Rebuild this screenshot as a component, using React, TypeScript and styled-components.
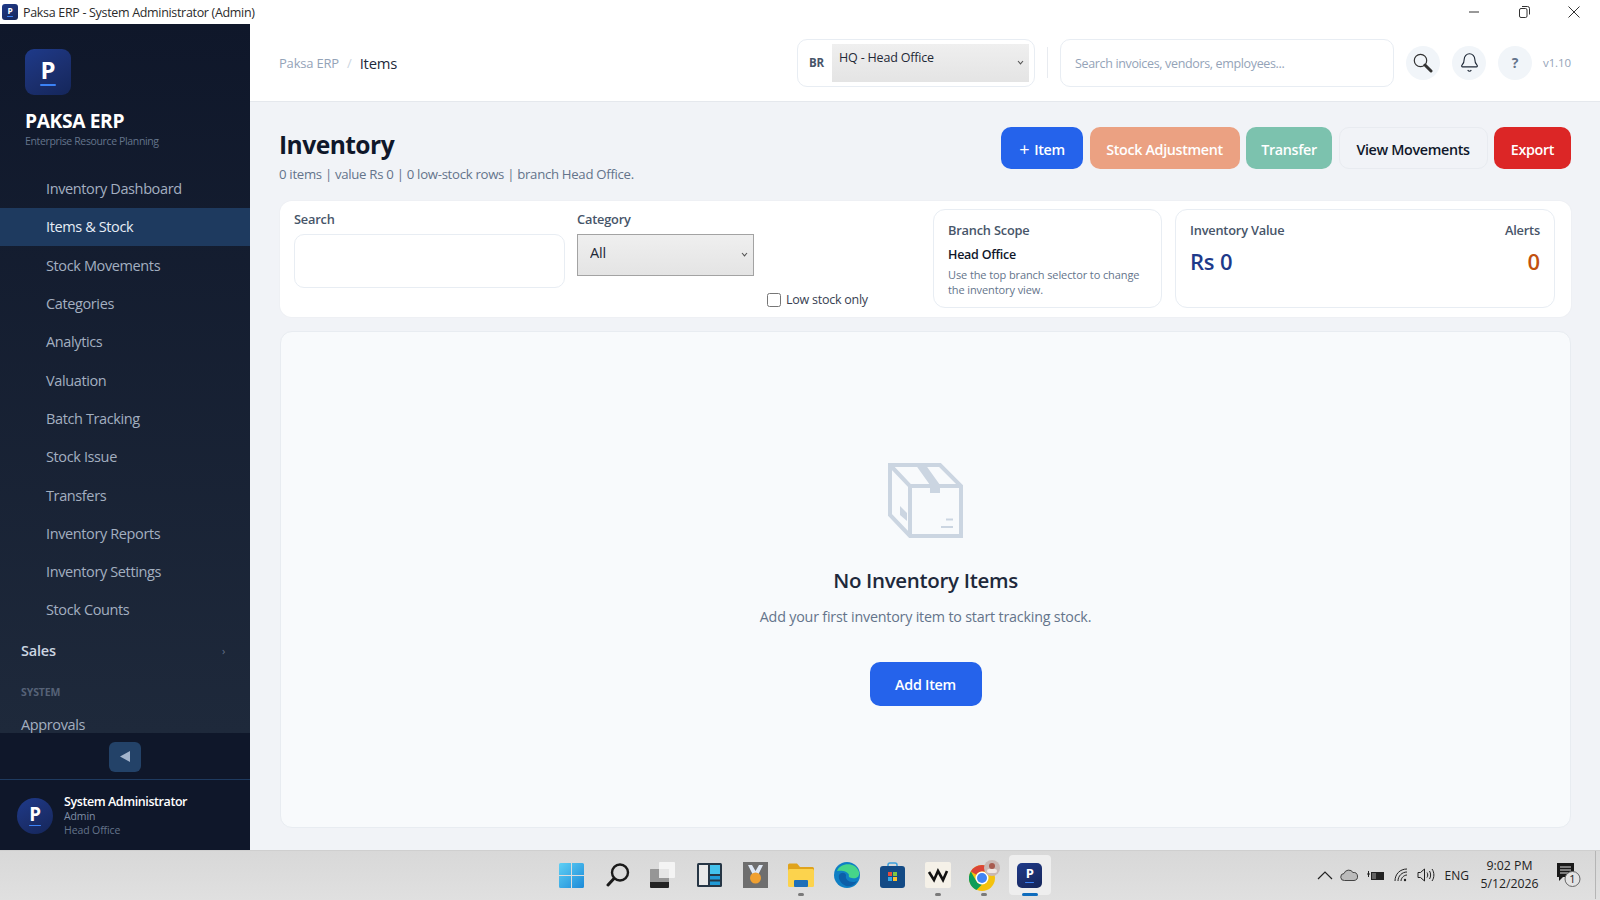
import React from "react";
import styled, { createGlobalStyle } from "styled-components";
import { Bell } from "lucide-react";

const Global = createGlobalStyle`
  * { box-sizing: border-box; }
  html, body { margin: 0; padding: 0; width: 1600px; height: 900px; overflow: hidden; }
  body { font-family: "Open Sans", "Noto Sans", "Liberation Sans", sans-serif; background: #fff; color: #0f172a; }
`;

const Screen = styled.div`display: flex; flex-direction: column; width: 1600px; height: 900px;`;

const TitleBar = styled.div`display: flex; align-items: center; height: 24px; padding: 0 0 0 2px; background: #fff; flex: none;`;
const TitleText = styled.span`margin-left: 5px; font-size: 12.5px; letter-spacing: -0.32px; color: #2b2b2b;`;
const WindowControls = styled.div`display: flex; margin-left: auto; padding-right: 1px;`;
const WindowButton = styled.div`width: 50px; height: 24px; display: flex; align-items: center; justify-content: center; color: #333;`;

const MiniLogo = styled.div<{ $size: number; $radius: string }>`
  width: ${p => p.$size}px; height: ${p => p.$size}px; border-radius: ${p => p.$radius};
  background: linear-gradient(150deg, #1e3a8a 0%, #1b2f6e 55%, #14265a 100%);
  display: flex; flex-direction: column; align-items: center; justify-content: center; flex: none;
  color: #fff; font-weight: 700; font-size: ${p => p.$size * 0.52}px; line-height: 1;
  &::after { content: ""; display: block; width: 36%; height: ${p => Math.max(1, p.$size * 0.04)}px; margin-top: ${p => p.$size * 0.05}px; background: #3b82f6; border-radius: 1px; }
`;

const Body = styled.div`display: flex; height: 826px; flex: none;`;

const Sidebar = styled.aside`display: flex; flex-direction: column; width: 250px; flex: none; background: #0f172a;`;
const SidebarScroll = styled.div`flex: 1; min-height: 0; overflow: hidden; background: linear-gradient(180deg, #0f172a 0%, #1e293b 100%);`;
const Brand = styled.div`height: 145.5px; padding: 25px 25px 0;`;
const BrandName = styled.div`margin-top: 14px; font-size: 19.2px; line-height: 24px; font-weight: 700; letter-spacing: -0.35px; color: #fff;`;
const BrandSub = styled.div`margin-top: 1px; font-size: 10.5px; line-height: 14px; letter-spacing: -0.36px; color: #64748b;`;
const NavItem = styled.div<{ $active?: boolean }>`
  height: 38.3px; display: flex; align-items: center; padding-left: 46px;
  font-size: 14.5px; letter-spacing: -0.38px; color: ${p => (p.$active ? "#e6edf6" : "#a3afc0")};
  background: ${p => (p.$active ? "#1e3a5f" : "transparent")};
`;
const NavGroup = styled.div`height: 38px; display: flex; align-items: center; justify-content: space-between; padding: 0 25px 0 21px; margin-top: 2px; font-size: 14.5px; font-weight: 600; letter-spacing: -0.2px; color: #cbd5e1;`;
const GroupChevron = styled.span`font-size: 11px; font-weight: 400; color: #64748b;`;
const NavSection = styled.div`padding-left: 21px; margin-top: 14px; height: 18px; line-height: 18px; font-size: 10.5px; font-weight: 700; letter-spacing: -0.1px; color: #566277;`;
const NavPlain = styled.div`height: 38px; display: flex; align-items: center; padding-left: 21px; margin-top: 4px; font-size: 14.5px; letter-spacing: -0.38px; color: #a3afc0;`;

const CollapseRow = styled.div`height: 47px; flex: none; display: flex; align-items: center; justify-content: center; border-bottom: 1px solid #1e3a5f; padding-top: 1px; background: #0f172a;`;
const CollapseButton = styled.button`width: 32px; height: 30px; border: 0; padding: 0; border-radius: 6px; background: #234268; color: #94a3b8; display: flex; align-items: center; justify-content: center;`;
const UserRow = styled.div`height: 70px; flex: none; display: flex; align-items: center; gap: 11px; padding: 1px 17px 0;`;
const UserText = styled.div`display: flex; flex-direction: column;`;
const UserName = styled.div`font-size: 12.5px; line-height: 15px; font-weight: 600; letter-spacing: -0.42px; color: #fff;`;
const UserMeta = styled.div<{ $dim?: boolean }>`font-size: 10.5px; line-height: 14px; letter-spacing: -0.1px; color: ${p => (p.$dim ? "#64748b" : "#7f8ea6")};`;

const Main = styled.main`flex: 1; min-width: 0; display: flex; flex-direction: column; background: #f1f3f7;`;
const TopBar = styled.header`height: 78px; flex: none; display: flex; align-items: center; padding: 0 29px 0 29px; background: #fff; border-bottom: 1px solid #e5e8ed;`;
const Crumb = styled.span`font-size: 13px; letter-spacing: -0.2px; color: #94a3b8; padding-top: 1px;`;
const CrumbSep = styled.span`margin: 0 8px; font-size: 13px; color: #cbd5e1; padding-top: 1px;`;
const CrumbNow = styled.span`font-size: 14.8px; font-weight: 500; letter-spacing: -0.25px; color: #1e293b; padding-top: 1px;`;

const BranchBox = styled.div`margin-left: auto; width: 238px; height: 48px; display: flex; align-items: center; padding: 0 5px 0 0; background: #fff; border: 1px solid #e8edf3; border-radius: 10px;`;
const BranchTag = styled.span`width: 36px; padding-left: 3px; text-align: center; font-size: 11.5px; font-weight: 700; color: #475569; letter-spacing: -0.2px;`;
const SelectWrap = styled.div`position: relative; display: flex;`;
const Caret = styled.svg<{ $right: number }>`position: absolute; right: ${p => p.$right}px; top: 50%; margin-top: -3px; pointer-events: none;`;
const BranchSelect = styled.select`
  appearance: none; width: 197px; height: 38px; border: 0; border-radius: 0; padding: 0 7px 11px;
  background: linear-gradient(180deg, #efefef 0%, #e4e4e4 100%);
  font: 400 12.5px "Open Sans", sans-serif; letter-spacing: -0.18px; color: #1f2937;
`;
const Divider = styled.div`width: 1px; height: 31px; margin: 0 12px; background: #e8ebf0;`;
const GlobalSearch = styled.input`
  width: 334px; height: 48px; padding: 1px 14px 0; background: #fff; border: 1px solid #e8edf3; border-radius: 10px;
  font: 400 12.5px "Open Sans", sans-serif; letter-spacing: -0.35px; outline: none;
  &::placeholder { color: #94a3b8; opacity: 1; }
`;
const IconCircle = styled.div`
  width: 34px; height: 34px; margin-left: 12px; border-radius: 50%; background: #f1f5f9;
  display: flex; align-items: center; justify-content: center; color: #1f2937; flex: none;
  font-size: 14px; font-weight: 700;
`;
const HelpMark = styled.span`color: #64748b;`;
const Version = styled.span`margin-left: 11px; font-size: 11.5px; letter-spacing: -0.1px; color: #94a3b8;`;

const Content = styled.div`flex: 1; min-height: 0; display: flex; flex-direction: column; padding: 25px 29px 22px 30px;`;
const PageHead = styled.div`display: flex; justify-content: space-between; height: 74px; flex: none;`;
const TitleBlock = styled.div`margin-left: -1px;`;
const PageTitle = styled.h1`margin: 0; font-size: 24.6px; line-height: 36px; font-weight: 700; letter-spacing: -0.55px; color: #0f172a;`;
const PageSub = styled.p`margin: 2px 0 0; font-size: 13.2px; line-height: 18px; letter-spacing: -0.3px; color: #64748b;`;
const Actions = styled.div`display: flex; gap: 6.5px; height: 42px;`;
const Action = styled.button<{ $bg: string; $fg?: string; $w: number; $line?: boolean }>`
  width: ${p => p.$w}px; height: 42px; border-radius: 10px; padding: 2px 0 0;
  border: ${p => (p.$line ? "1px solid #e8ebf0" : "0")};
  background: ${p => p.$bg}; color: ${p => p.$fg || "#fff"};
  font: 600 14.3px "Open Sans", sans-serif; letter-spacing: -0.33px;
`;
const PlusMark = styled.span`font-size: 18px; font-weight: 400; line-height: 1; margin-right: 5px; vertical-align: -1px;`;

const FilterCard = styled.section`height: 116px; flex: none; display: flex; background: #fff; border-radius: 12px; padding: 8px 15px 9px 14px; box-shadow: 0 0 0 1px #eef0f4;`;
const Field = styled.div<{ $w: number }>`width: ${p => p.$w}px; margin-right: 12px; padding-top: 1px; flex: none;`;
const FieldLabel = styled.label`display: block; font-size: 12.8px; line-height: 18px; font-weight: 600; letter-spacing: -0.2px; color: #475569; margin-bottom: 6px;`;
const TextField = styled.input`display: block; width: 100%; height: 54px; border: 1px solid #e8edf3; border-radius: 10px; background: #fff; outline: none;`;
const CategorySelect = styled.select`
  appearance: none; display: block; width: 177px; height: 42px; border: 1px solid #a3a3a3; border-radius: 0; padding: 0 12px 6px;
  background: linear-gradient(180deg, #efefef 0%, #e4e4e4 100%);
  font: 400 14.5px "Open Sans", sans-serif; letter-spacing: -0.2px; color: #1f2937;
`;
const CheckColumn = styled.div`width: 167px; flex: none; display: flex; align-items: flex-end; padding: 0 0 0 1px;`;
const CheckLabel = styled.label`display: flex; align-items: center; gap: 5px; font-size: 12.5px; letter-spacing: -0.25px; color: #374151;`;
const CheckBox = styled.span`width: 14px; height: 14px; border: 1px solid #767676; border-radius: 2.5px; background: #fff;`;

const InfoCard = styled.div<{ $w: number; $gap?: number }>`
  width: ${p => p.$w}px; margin-left: ${p => p.$gap || 0}px; flex: none; padding: 10px 14px 0; background: #fff;
  border: 1px solid #e8edf3; border-radius: 12px;
`;
const InfoLabel = styled.div`font-size: 12.8px; line-height: 20px; font-weight: 600; letter-spacing: -0.2px; color: #475569;`;
const InfoStrong = styled.div`margin-top: 6px; font-size: 12.5px; line-height: 18px; font-weight: 600; letter-spacing: -0.25px; color: #0f172a;`;
const InfoNote = styled.div`margin-top: 3px; font-size: 11px; line-height: 15px; letter-spacing: -0.1px; color: #64748b;`;
const InfoSplit = styled.div`display: flex; justify-content: space-between;`;
const InfoColumn = styled.div<{ $end?: boolean }>`text-align: ${p => (p.$end ? "right" : "left")};`;
const Figure = styled.div<{ $color: string }>`margin-top: 6px; font-size: 22px; line-height: 30px; font-weight: 600; letter-spacing: -0.2px; color: ${p => p.$color};`;

const EmptyCard = styled.section`margin-top: 14px; flex: 1; min-height: 0; display: flex; flex-direction: column; align-items: center; padding-top: 131px; background: #f8fafc; border: 1px solid #e8ecf1; border-radius: 12px;`;
const EmptyTitle = styled.h2`margin: 28px 0 0; font-size: 20.5px; line-height: 28px; font-weight: 600; letter-spacing: -0.32px; color: #1e293b;`;
const EmptyText = styled.p`margin: 12px 0 0; font-size: 14.3px; line-height: 22px; letter-spacing: -0.2px; color: #64748b;`;
const AddButton = styled.button`margin-top: 34px; width: 112px; height: 44px; border: 0; border-radius: 10px; background: #2563eb; color: #fff; font: 600 14.3px "Open Sans", sans-serif; letter-spacing: -0.25px;`;

const TaskBar = styled.footer`height: 50px; flex: none; display: flex; align-items: center; padding: 0 4px 1px 551px; background: linear-gradient(180deg, #d8d8d8 0%, #e0e0e0 100%); border-top: 1px solid #cfcfcf;`;
const TaskIcons = styled.div`display: flex; align-items: center; gap: 4px;`;
const TaskSlot = styled.div<{ $active?: boolean }>`
  position: relative; width: 41.8px; height: 40px; display: flex; align-items: center; justify-content: center; border-radius: 4px;
  background: ${p => (p.$active ? "#eeeeee" : "transparent")};
`;
const RunDot = styled.span<{ $active?: boolean }>`
  position: absolute; bottom: -1px; left: 50%; transform: translateX(-50%); height: 3px; border-radius: 2px;
  width: ${p => (p.$active ? 16 : 6)}px; background: ${p => (p.$active ? "#0f6cbd" : "#7a7a7a")};
`;
const Tray = styled.div`margin-left: auto; display: flex; align-items: center; color: #222; align-self: stretch;`;
const TrayIcon = styled.div<{ $gap: number }>`margin-left: ${p => p.$gap}px; display: flex; align-self: center;`;
const TrayLang = styled.span`margin-left: 10px; font-size: 12px; color: #222; align-self: center;`;
const Clock = styled.div`margin-left: 10.5px; width: 60px; align-self: center; text-align: center; font-size: 12.3px; line-height: 18px; color: #222;`;
const ShowDesktop = styled.div`width: 1px; align-self: stretch; margin-left: 13px; background: #b5b5b5;`;

const inventoryLinks = ["Inventory Dashboard", "Items & Stock", "Stock Movements", "Categories", "Analytics", "Valuation", "Batch Tracking", "Stock Issue", "Transfers", "Inventory Reports", "Inventory Settings", "Stock Counts"];

const caret = (right: number) => (
  <Caret $right={right} width="7" height="5" viewBox="0 0 7 5" fill="none"><path d="M1 1 3.500 3.800 6 1" stroke="#555" strokeWidth="1.1" /></Caret>
);

const BoxIcon = () => (
  <svg width="75" height="75" viewBox="0 0 75 75" fill="none" stroke="#cbd5e1" strokeWidth="4">
    <path d="M2 2H52L73 23V73H22L2 52Z" />
    <path d="M2 2 22 23V73M22 23H73" />
    <path d="M27 1H37L52 22V30H42V22Z" fill="#cbd5e1" stroke="none" />
    <path d="M12 43 19 50V58L12 52Z" fill="#cbd5e1" stroke="none" />
    <path d="M58 56.500H65M53 64H65" strokeWidth="2" />
  </svg>
);

const TopSearchIcon = () => (
  <svg width="20" height="20" viewBox="0 0 20 20" fill="none">
    <circle cx="7.500" cy="7.500" r="6.200" stroke="#333" strokeWidth="1.200" />
    <path d="M12 12 18 18" stroke="#333" strokeWidth="3" strokeLinecap="round" />
  </svg>
);

const Win = () => (
  <svg width="25" height="25" viewBox="0 0 25 25"><defs><linearGradient id="w" x1="0" y1="0" x2="1" y2="1"><stop offset="0" stopColor="#5fd0f5" /><stop offset="1" stopColor="#1c8ad8" /></linearGradient></defs><path fill="url(#w)" d="M0 1.500A1.500 1.500 0 0 1 1.500 0H12V12H0ZM13 0H23.500A1.500 1.500 0 0 1 25 1.500V12H13ZM0 13H12V25H1.500A1.500 1.500 0 0 1 0 23.500ZM13 13H25V23.500A1.500 1.500 0 0 1 23.500 25H13Z" /></svg>
);
const Magnify = () => (
  <svg width="24" height="24" viewBox="0 0 24 24" fill="none" stroke="#1a1a1a"><circle cx="14" cy="9.500" r="8" strokeWidth="2.400" /><path d="M8 15.500 2 22" strokeWidth="3" strokeLinecap="round" /></svg>
);
const TaskView = () => (
  <svg width="26" height="26" viewBox="0 0 26 26"><rect x="9" y="0" width="16" height="16" rx="1" fill="#f4f4f4" /><rect x="0" y="7" width="19" height="19" rx="1" fill="#222" /><rect x="0" y="7" width="19" height="13" fill="#aaa" opacity=".85" /><rect x="9" y="7" width="10" height="9" fill="#e5e5e5" /></svg>
);
const Widgets = () => (
  <svg width="25" height="24" viewBox="0 0 25 24"><rect width="25" height="24" rx="1.500" fill="#263645" /><rect x="2" y="2" width="9" height="20" fill="#e9e9e9" /><rect x="13" y="2" width="10" height="9" fill="#44c2ec" /><rect x="13" y="13" width="10" height="3.500" fill="#1f9ad6" /><rect x="13" y="18.500" width="10" height="3.500" fill="#1f9ad6" /></svg>
);
const Medal = () => (
  <svg width="25" height="26" viewBox="0 0 25 26"><rect width="25" height="26" fill="#6e6e6e" /><path d="M5 3H9L12.500 9 16 3H20L15 13H10Z" fill="#dfe8f5" /><circle cx="12.500" cy="16" r="5.500" fill="#f0a030" /></svg>
);
const Folder = () => (
  <svg width="26" height="24" viewBox="0 0 26 24"><path d="M0 2A1.500 1.500 0 0 1 1.500.5H9L12 4H24.500A1.500 1.500 0 0 1 26 5.500V8H0Z" fill="#e0a31c" /><rect y="6" width="26" height="18" rx="1.500" fill="#fcd34d" /><rect x="6" y="17" width="14" height="7" rx="1" fill="#1e6fb8" /></svg>
);
const Edge = () => (
  <svg width="26" height="26" viewBox="0 0 26 26"><circle cx="13" cy="13" r="13" fill="#0f7fc4" /><path d="M3 9C6 1 21-1 25 10c1 5-3 7-7 6-2 0-4-1-3-3-1-4-8-5-12-4Z" fill="#46d58a" /><path d="M5 13c2-3 6-3 7 0-1 4 2 7 7 7 1.500 0 3-.5 4-1-3 5-8 6-11 5-5-2-8-7-7-11Z" fill="#0c5ea8" /></svg>
);
const Store = () => (
  <svg width="25" height="26" viewBox="0 0 25 26" fill="none"><path d="M8 6V3A2 2 0 0 1 10 1H15A2 2 0 0 1 17 3V6" stroke="#3ea0dc" strokeWidth="1.500" /><rect y="4" width="25" height="22" rx="3" fill="#134a85" /><rect x="8" y="10" width="4" height="4" fill="#e74c3c" /><rect x="13" y="10" width="4" height="4" fill="#7cc542" /><rect x="8" y="15" width="4" height="4" fill="#36a5e6" /><rect x="13" y="15" width="4" height="4" fill="#fbc02d" /></svg>
);
const WLogo = () => (
  <svg width="26" height="26" viewBox="0 0 26 26" fill="none"><rect width="26" height="26" rx="2" fill="#f5f1e8" /><path d="M4 10 9 18 13 9 18 18 22 9" stroke="#111" strokeWidth="2.600" /></svg>
);
const Chrome = () => (
  <svg width="31" height="32" viewBox="0 0 31 32"><circle cx="13" cy="19" r="13" fill="#f4c20d" /><path d="M13 6A13 13 0 0 1 24.300 12.500H13A6.500 6.500 0 0 0 7.400 15.800L1.800 12.500A13 13 0 0 1 13 6Z" fill="#db4437" /><path d="M1.800 12.500 7.400 22.300A6.500 6.500 0 0 0 13 25.500L7.400 31A13 13 0 0 1 1.800 12.500Z" fill="#0f9d58" /><circle cx="13" cy="19" r="6.500" fill="#fff" /><circle cx="13" cy="19" r="5" fill="#4285f4" /><circle cx="23" cy="9" r="8" fill="#c9b8b4" /><circle cx="23" cy="7" r="3" fill="#a85a4e" /><rect x="18" y="10" width="10" height="4" rx="2" fill="#efe6e2" /></svg>
);

const Sparkle = { stroke: "#222", fill: "none" } as const;

export default function App() {
  return (
    <Screen>
      <Global />
      <TitleBar>
        <MiniLogo $size={16} $radius="3px">P</MiniLogo>
        <TitleText>Paksa ERP - System Administrator (Admin)</TitleText>
        <WindowControls>
          <WindowButton><svg width="10" height="10" viewBox="0 0 10 10"><path d="M0 5H10" stroke="#333" /></svg></WindowButton>
          <WindowButton><svg width="11" height="12" viewBox="0 0 11 12" fill="none" stroke="#333"><rect x=".5" y="2.500" width="7.500" height="9" rx="1.500" /><path d="M3 .5H8.500A2 2 0 0 1 10.500 2.500V8.500" /></svg></WindowButton>
          <WindowButton><svg width="12" height="12" viewBox="0 0 12 12" stroke="#333"><path d="M.5.5 11.500 11.500M11.500.5.5 11.500" /></svg></WindowButton>
        </WindowControls>
      </TitleBar>
      <Body>
        <Sidebar>
          <SidebarScroll>
            <Brand>
              <MiniLogo $size={46} $radius="9px">P</MiniLogo>
              <BrandName>PAKSA ERP</BrandName>
              <BrandSub>Enterprise Resource Planning</BrandSub>
            </Brand>
            {inventoryLinks.map(l => <NavItem key={l} $active={l === "Items & Stock"}>{l}</NavItem>)}
            <NavGroup>Sales<GroupChevron>›</GroupChevron></NavGroup>
            <NavSection>SYSTEM</NavSection>
            <NavPlain>Approvals</NavPlain>
          </SidebarScroll>
          <CollapseRow>
            <CollapseButton aria-label="Collapse"><svg width="10" height="11" viewBox="0 0 10 11"><path d="M0 5.500 10 0V11Z" fill="#a3b4cc" /></svg></CollapseButton>
          </CollapseRow>
          <UserRow>
            <MiniLogo $size={36} $radius="50%">P</MiniLogo>
            <UserText>
              <UserName>System Administrator</UserName>
              <UserMeta>Admin</UserMeta>
              <UserMeta $dim>Head Office</UserMeta>
            </UserText>
          </UserRow>
        </Sidebar>
        <Main>
          <TopBar>
            <Crumb>Paksa ERP</Crumb><CrumbSep>/</CrumbSep><CrumbNow>Items</CrumbNow>
            <BranchBox>
              <BranchTag>BR</BranchTag>
              <SelectWrap>
                <BranchSelect defaultValue="hq"><option value="hq">HQ - Head Office</option></BranchSelect>
                {caret(5)}
              </SelectWrap>
            </BranchBox>
            <Divider />
            <GlobalSearch placeholder="Search invoices, vendors, employees..." />
            <IconCircle><TopSearchIcon /></IconCircle>
            <IconCircle><Bell size={21} strokeWidth={1.3} /></IconCircle>
            <IconCircle><HelpMark>?</HelpMark></IconCircle>
            <Version>v1.10</Version>
          </TopBar>
          <Content>
            <PageHead>
              <TitleBlock>
                <PageTitle>Inventory</PageTitle>
                <PageSub>0 items | value Rs 0 | 0 low-stock rows | branch Head Office.</PageSub>
              </TitleBlock>
              <Actions>
                <Action $bg="#2563eb" $w={82}><PlusMark>+</PlusMark>Item</Action>
                <Action $bg="#eba182" $w={150}>Stock Adjustment</Action>
                <Action $bg="#7cc2ae" $w={86}>Transfer</Action>
                <Action $bg="#f1f3f7" $fg="#0f172a" $w={149} $line>View Movements</Action>
                <Action $bg="#dc2626" $w={77}>Export</Action>
              </Actions>
            </PageHead>
            <FilterCard>
              <Field $w={271}>
                <FieldLabel>Search</FieldLabel>
                <TextField />
              </Field>
              <Field $w={177}>
                <FieldLabel>Category</FieldLabel>
                <SelectWrap>
                  <CategorySelect defaultValue="all"><option value="all">All</option></CategorySelect>
                  {caret(6)}
                </SelectWrap>
              </Field>
              <CheckColumn>
                <CheckLabel><CheckBox />Low stock only</CheckLabel>
              </CheckColumn>
              <InfoCard $w={229}>
                <InfoLabel>Branch Scope</InfoLabel>
                <InfoStrong>Head Office</InfoStrong>
                <InfoNote>Use the top branch selector to change the inventory view.</InfoNote>
              </InfoCard>
              <InfoCard $w={380} $gap={13}>
                <InfoSplit>
                  <InfoColumn>
                    <InfoLabel>Inventory Value</InfoLabel>
                    <Figure $color="#1e3a8a">Rs 0</Figure>
                  </InfoColumn>
                  <InfoColumn $end>
                    <InfoLabel>Alerts</InfoLabel>
                    <Figure $color="#c2510f">0</Figure>
                  </InfoColumn>
                </InfoSplit>
              </InfoCard>
            </FilterCard>
            <EmptyCard>
              <BoxIcon />
              <EmptyTitle>No Inventory Items</EmptyTitle>
              <EmptyText>Add your first inventory item to start tracking stock.</EmptyText>
              <AddButton>Add Item</AddButton>
            </EmptyCard>
          </Content>
        </Main>
      </Body>
      <TaskBar>
        <TaskIcons>
          <TaskSlot><Win /></TaskSlot>
          <TaskSlot><Magnify /></TaskSlot>
          <TaskSlot><TaskView /></TaskSlot>
          <TaskSlot><Widgets /></TaskSlot>
          <TaskSlot><Medal /></TaskSlot>
          <TaskSlot><Folder /><RunDot /></TaskSlot>
          <TaskSlot><Edge /></TaskSlot>
          <TaskSlot><Store /></TaskSlot>
          <TaskSlot><WLogo /><RunDot /></TaskSlot>
          <TaskSlot><Chrome /><RunDot /></TaskSlot>
          <TaskSlot $active><MiniLogo $size={25} $radius="5px">P</MiniLogo><RunDot $active /></TaskSlot>
        </TaskIcons>
        <Tray>
          <TrayIcon $gap={0}><svg width="16" height="9" viewBox="0 0 16 9" {...Sparkle}><path d="M1 8 8 1 15 8" strokeWidth="1.2" /></svg></TrayIcon>
          <TrayIcon $gap={7}><svg width="18" height="12" viewBox="0 0 18 12"><path d="M4.500 11.500A3.500 3.500 0 0 1 4 4.500 5 5 0 0 1 13 3.500 4 4 0 0 1 14 11.500Z" fill="#bbb" stroke="#444" /></svg></TrayIcon>
          <TrayIcon $gap={9}><svg width="17" height="11" viewBox="0 0 17 11"><rect x="4" y="2" width="13" height="8" fill="#222" /><path d="M0 4H3M1.500 1V7" stroke="#222" /><rect x="5" y="3" width="4" height="6" fill="#ddd" opacity=".35" /></svg></TrayIcon>
          <TrayIcon $gap={10}><svg width="15" height="14" viewBox="0 0 15 14" {...Sparkle}><path d="M1 13C1 6 6 1 13 1M4 13C4 8 8 4 13 4M7 13C7 10 10 7 13 7" strokeWidth="1" /><circle cx="11" cy="12" r="1.2" fill="#222" stroke="none" /></svg></TrayIcon>
          <TrayIcon $gap={8}><svg width="18" height="14" viewBox="0 0 18 14" {...Sparkle}><path d="M1 4.500H3.500L7.500 1V13L3.500 9.500H1Z" strokeWidth="1" /><path d="M10 4.500C11 6 11 8 10 9.500M12.500 3C14 5.500 14 8.500 12.500 11M15 1C17.500 4.500 17.500 9.500 15 13" strokeWidth="1" /></svg></TrayIcon>
          <TrayLang>ENG</TrayLang>
          <Clock>9:02 PM<br />5/12/2026</Clock>
          <TrayIcon $gap={16.5}><svg width="26" height="26" viewBox="0 0 26 26"><path d="M1 1H18V15H7L3 19V15H1Z" fill="#1a1a1a" /><path d="M4 5H15M4 8H15M4 11H12" stroke="#ddd" /><circle cx="16.500" cy="17" r="7.500" fill="#e3e3e3" stroke="#666" /><text x="16.500" y="21" textAnchor="middle" fontSize="11" fill="#222" fontFamily="Open Sans">1</text></svg></TrayIcon>
          <ShowDesktop />
        </Tray>
      </TaskBar>
    </Screen>
  );
}
